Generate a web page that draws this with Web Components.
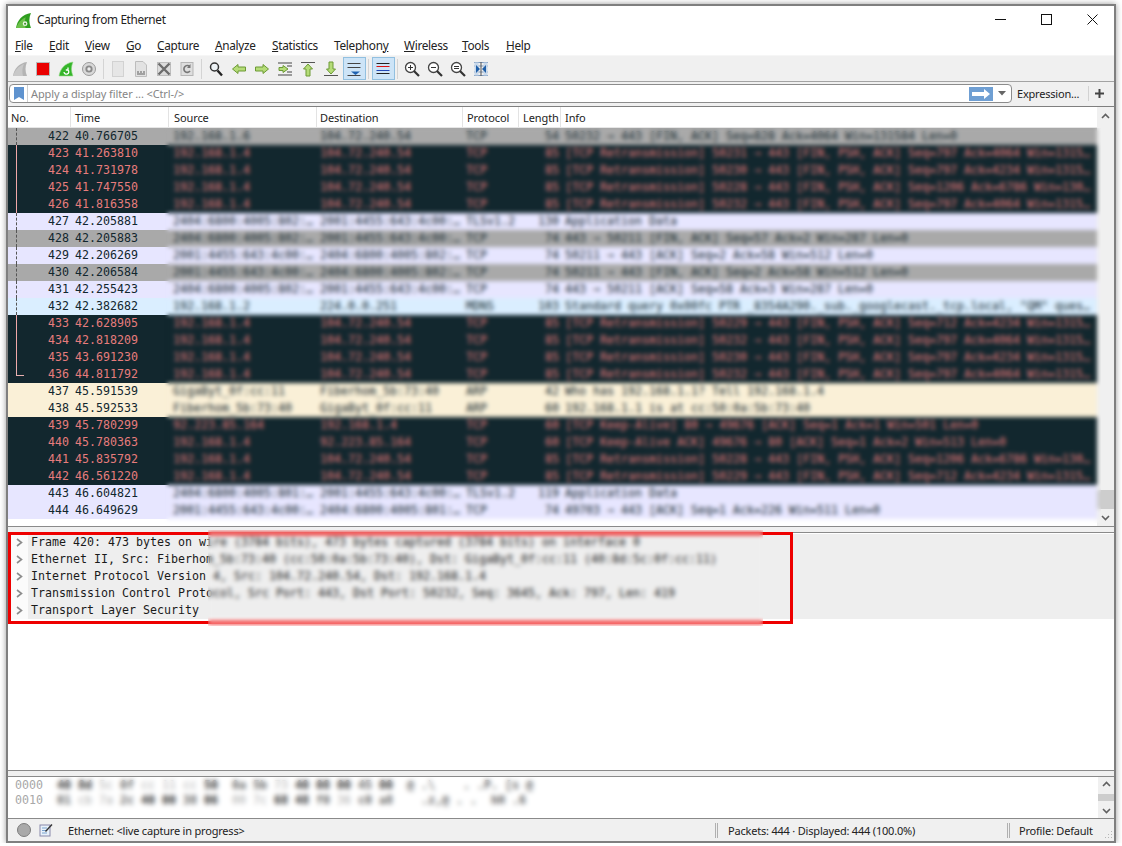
<!DOCTYPE html>
<html>
<head>
<meta charset="utf-8">
<title>Capturing from Ethernet</title>
<style>
html, body { margin: 0; background: #fff; }
body { padding: 4px 6px 0; font-family: "Noto Sans", sans-serif; font-size: 12px; color: #1a1a1a; }
</style>
</head>
<body>
<ws-window>
  <ws-titlebar>Capturing from Ethernet</ws-titlebar>
  <ws-menubar></ws-menubar>
  <ws-toolbar></ws-toolbar>
  <ws-filterbar></ws-filterbar>
  <ws-packet-list></ws-packet-list>
  <ws-detail-tree></ws-detail-tree>
  <ws-hex-view></ws-hex-view>
  <ws-statusbar></ws-statusbar>
</ws-window>

<script>
const MONO = '"DejaVu Sans Mono", monospace'
const FIN = "M1 15C2 8 7 2 15 1C13 6 13 10 15 15Z"

function shadow(el, html) {
    const root = el.attachShadow({ mode: "open" })
    root.innerHTML = html
    return root
}

class WsWindow extends HTMLElement {
    constructor() {
        super()
        shadow(this, `
<style>
:host {
    display: flex;
    flex-direction: column;
    box-sizing: border-box;
    width: 1110px;
    height: 839px;
    border: 2px solid #7f7f7f;
    background: #f0f0f0;
    box-shadow: 0 0 6px rgba(0,0,0,.4);
}
</style>
<slot></slot>`)
    }
}

class WsTitlebar extends HTMLElement {
    constructor() {
        super()
        shadow(this, `
<style>
:host { display: flex; align-items: center; height: 30px; background: #fff; padding: 0 0 0 7px; flex: none; }
svg { flex: none; }
.logo { margin-right: 5px; margin-top: -2px; }
.text { flex: 1; font-size: 11.8px; letter-spacing: -.33px; color: #222; margin-top: -4px; }
.btn { display: flex; justify-content: center; width: 46px; margin-top: -4px; }
.btn:last-child { margin-right: -1px; }
</style>
<svg class="logo" width="17" height="17" viewBox="0 0 16 16">
  <path d="${FIN}" fill="#2f9e1f"/><path d="M1 15C3 10 6 7 10 5C9 9 9 12 10 15Z" fill="#6cc04a"/>
  <circle cx="9.5" cy="11" r="2.2" fill="#e8f4e0"/><circle cx="9.5" cy="11" r="1" fill="#3d8f2d"/>
</svg>
<span class="text"><slot></slot></span>
<span class="btn"><svg width="11" height="11"><path d="M0 5.5H11" stroke="#111"/></svg></span>
<span class="btn"><svg width="11" height="11"><rect x=".5" y=".5" width="10" height="10" fill="none" stroke="#111"/></svg></span>
<span class="btn"><svg width="11" height="11"><path d="M.5 .5L10.5 10.5M10.5 .5L.5 10.5" stroke="#111"/></svg></span>`)
    }
}

// label pieces, underlined part, width of the item
const MENUS = [["", "F", "ile", 34], ["", "E", "dit", 36], ["", "V", "iew", 41], ["", "G", "o", 31], ["", "C", "apture", 58], ["", "A", "nalyze", 57], ["", "S", "tatistics", 62], ["Telephon", "y", "", 70], ["", "W", "ireless", 58], ["", "T", "ools", 44], ["", "H", "elp", 40]]

class WsMenubar extends HTMLElement {
    constructor() {
        super()
        let items = MENUS.map(m => `<span style="width:${m[3]}px">${m[0]}<u>${m[1]}</u>${m[2]}</span>`).join("")
        shadow(this, `
<style>
:host { display: flex; align-items: center; height: 20px; flex: none; background: #fff; padding: 0 0 2px 7px; box-sizing: border-box; border-bottom: 1px solid #f6f6f6; font-size: 11.8px; letter-spacing: -.3px; color: #222; }
span { flex: none; white-space: nowrap; }
u { text-underline-offset: 1px; }
</style>
${items}`)
    }
}

const IC = {
    fin: `<path d="${FIN}" fill="#b4b4b4"/><path d="M1 15C3 9 7 5 12 3C10 7 10 11 11 15Z" fill="#c8c8c8"/>`,
    stop: `<rect x="1.5" y="1.5" width="13" height="13" fill="#ea0000" stroke="#b9b9b9"/>`,
    restart: `<path d="${FIN}" fill="#35b52a" stroke="#9bdc8e" stroke-width=".6"/><path d="M6 11a2.4 2.4 0 1 0 4-2M10 6.5V9H7.8" fill="none" stroke="#fff" stroke-width="1.3"/>`,
    gear: `<circle cx="8" cy="8" r="6.5" fill="#d8d8d8" stroke="#9a9a9a"/><circle cx="8" cy="8" r="3.6" fill="#8a8a8a"/><circle cx="8" cy="8" r="1.7" fill="#ececec"/>`,
    file: `<rect x="2.5" y=".5" width="11" height="15" fill="#e6e6e6" stroke="#d2d2d2"/>`,
    bin: `<path d="M2.5 .5H10L13.5 4V15.5H2.5Z" fill="#e2e2e2" stroke="#bdbdbd"/><path d="M4 11H6M7 11H9M10 11H12M4 13H12" stroke="#8c8c8c" stroke-width="1.4"/>`,
    close: `<rect x="1.5" y="1.5" width="13" height="13" fill="#dcdcdc" stroke="#bdbdbd"/><path d="M2.5 2.5L13.5 13.5M13.5 2.5L2.5 13.5" stroke="#6d6d6d" stroke-width="2.4"/>`,
    reload: `<rect x="2" y="1.5" width="12" height="13" fill="#dedede" stroke="#b5b5b5"/><path d="M11 10a3.4 3.4 0 1 1-.4-4.6" fill="none" stroke="#777" stroke-width="1.7"/><path d="M11.5 3V7H8" fill="#777"/>`,
    find: `<circle cx="6.5" cy="6" r="4" fill="#eef3f6" stroke="#333" stroke-width="1.5"/><path d="M9.5 9.5L14 14.5" stroke="#222" stroke-width="2.4"/>`,
    back: `<path d="M1.5 8L7 3.5V6H14.5V10H7V12.5Z" fill="#b5dc78" stroke="#6c9a34"/>`,
    fwd: `<path d="M14.5 8L9 3.5V6H1.5V10H9V12.5Z" fill="#b5dc78" stroke="#6c9a34"/>`,
    go: `<path d="M1 2H15M1 14H15M10 5H15M10 11H15" stroke="#444"/><path d="M11 8L6 4.5V6.5H2V9.5H6V11.5Z" fill="#b5dc78" stroke="#6c9a34"/>`,
    up: `<path d="M1 1.5H15" stroke="#555"/><path d="M8 3L12.5 8H10V15H6V8H3.5Z" fill="#b5dc78" stroke="#6c9a34"/>`,
    down: `<path d="M1 14.5H15" stroke="#555"/><path d="M8 13L12.5 8H10V1H6V8H3.5Z" fill="#b5dc78" stroke="#6c9a34"/>`,
    auto: `<path d="M1.5 2.5H14.5M1.5 6.5H14.5M1.5 14.5H14.5" stroke="#444"/><path d="M5 10.5H14L9.5 14Z" fill="#1f62b0"/>`,
    color: `<path d="M1.5 2.5H14.5M1.5 12.5H14.5" stroke="#222"/><path d="M1.5 5.5H14.5" stroke="#d11"/><path d="M1.5 9.5H14.5" stroke="#2247b5"/>`,
    zin: `<circle cx="6.5" cy="6.5" r="5" fill="#fff" stroke="#444" stroke-width="1.3"/><path d="M10 10L15 15" stroke="#333" stroke-width="2.2"/><path d="M4 6.5H9M6.5 4V9" stroke="#333"/>`,
    zout: `<circle cx="6.5" cy="6.5" r="5" fill="#fff" stroke="#444" stroke-width="1.3"/><path d="M10 10L15 15" stroke="#333" stroke-width="2.2"/><path d="M4 6.5H9" stroke="#333"/>`,
    znorm: `<circle cx="6.5" cy="6.5" r="5" fill="#fff" stroke="#444" stroke-width="1.3"/><path d="M10 10L15 15" stroke="#333" stroke-width="2.2"/><path d="M4 5.5H9M4 7.5H9" stroke="#333"/>`,
    resize: `<path d="M1 1.5H15M1 14.5H15M1 5H15M1 11H15" stroke="#7f9cc0"/><rect x="1.5" y="1.5" width="4" height="13" fill="#c8d8ea"/><rect x="10.5" y="1.5" width="4" height="13" fill="#c8d8ea"/><path d="M7 8L3 4V12ZM9 8L13 4V12Z" fill="#1f5fa8"/><path d="M8 1V15" stroke="#555"/>`
}

class WsToolbar extends HTMLElement {
    constructor() {
        super()
        const btn = (n, on) => `<span class="b${on ? " on" : ""}"><svg width="16" height="16" viewBox="0 0 16 16">${IC[n]}</svg></span>`
        const sep = w => `<i style="width:${w}px"></i>`
        shadow(this, `
<style>
:host { display: flex; align-items: center; height: 26px; flex: none; box-sizing: border-box; background: #f0f0f0; border-bottom: 1px solid #a3a3a3; padding-left: .5px; }
.b { display: flex; align-items: center; justify-content: center; box-sizing: border-box; width: 23px; height: 23px; flex: none; }
.on { background: #cde4f7; border: 1px solid #92c0e0; }
i { display: block; height: 20px; flex: none; background: linear-gradient(#d4d4d4,#d4d4d4) center/1px 100% no-repeat; }
</style>
${["fin", "stop", "restart", "gear"].map(n => btn(n)).join("")}${sep(6)}
${["file", "bin", "close", "reload"].map(n => btn(n)).join("")}${sep(6)}
${["find", "back", "fwd", "go", "up", "down"].map(n => btn(n)).join("")}${btn("auto", 1)}${sep(6)}${btn("color", 1)}${sep(6)}
${["zin", "zout", "znorm", "resize"].map(n => btn(n)).join("")}`)
    }
}

class WsFilterbar extends HTMLElement {
    constructor() {
        super()
        shadow(this, `
<style>
:host { display: flex; align-items: center; height: 25px; flex: none; box-sizing: border-box; background: #f0f0f0; border-bottom: 1px solid #7f7f7f; padding: 0 0 1px 1px; }
.box { display: flex; align-items: center; box-sizing: border-box; width: 1003px; height: 19px; background: #fff; border: 1px solid #8c8c8c; border-radius: 4px; flex: none; }
.mark { width: 17px; display: flex; justify-content: center; border-right: 1px solid #cfcfcf; height: 17px; align-items: center; flex: none; }
.ph { flex: 1; padding-left: 3px; color: #858585; font-size: 11px; letter-spacing: -.12px; white-space: nowrap; }
.go { display: flex; align-items: center; justify-content: center; width: 24px; height: 14px; background: #6f9fd3; flex: none; }
.drop { width: 18px; display: flex; justify-content: center; flex: none; }
.exp { margin-left: 5px; width: 71px; font-size: 11px; letter-spacing: -.2px; color: #222; white-space: nowrap; border-right: 1px solid #d2d2d2; flex: none; }
.plus { flex: 1; display: flex; justify-content: center; padding-right: 4px; }
</style>
<div class="box">
  <span class="mark"><svg width="10" height="13"><path d="M0 0H10V13L5 10L0 13Z" fill="#5f93cf"/></svg></span>
  <span class="ph">Apply a display filter ... &lt;Ctrl-/&gt;</span>
  <span class="go"><svg width="18" height="10"><path d="M0 3H12V0L18 5L12 10V7H0Z" fill="#fff"/></svg></span>
  <span class="drop"><svg width="8" height="5"><path d="M0 0H8L4 4.5Z" fill="#666"/></svg></span>
</div>
<span class="exp">Expression...</span>
<span class="plus"><svg width="9" height="9"><path d="M4.5 0V9M0 4.5H9" stroke="#444" stroke-width="2"/></svg></span>`)
    }
}

class WsScrollbar extends HTMLElement {
    constructor() {
        super()
        shadow(this, `
<style>
:host { display: flex; flex-direction: column; align-items: center; flex: none; width: var(--sb-w, 17px); background: #f0f0f0; overflow: hidden; }
.a { flex: none; height: var(--sb-btn, 17px); display: flex; align-items: center; justify-content: center; }
.t { flex: 1; width: 100%; padding-top: var(--thumb-gap, 0); box-sizing: border-box; min-height: 0; }
.th { height: var(--thumb-h, 20px); background: #cdcdcd; }
</style>
<span class="a"><svg width="9" height="6"><path d="M1 5L4.5 1.5L8 5" fill="none" stroke="#606060" stroke-width="1.6"/></svg></span>
<div class="t"><div class="th"></div></div>
<span class="a"><svg width="9" height="6"><path d="M1 1L4.5 4.5L8 1" fill="none" stroke="#606060" stroke-width="1.6"/></svg></span>`)
    }
}

const RETR = (p, s, a, w) => `[TCP Retransmission] ${p} → 443 [FIN, PSH, ACK] Seq=${s} Ack=${a} Win=${w}`
const V4 = "192.168.1.4", SRV = "104.72.240.54"
const A = "2404:6800:4005:802:…", B = "2001:4455:643:4c00:…"
// no, time, src, dst, proto, len, info, colour
const PACKETS = [
    [422, "40.766705", "192.168.1.6", SRV, "TCP", 54, "50232 → 443 [FIN, ACK] Seq=828 Ack=4064 Win=131584 Len=0", "g"],
    [423, "41.263810", V4, SRV, "TCP", 85, RETR(50231, 797, 4064, "1315…"), "d"],
    [424, "41.731978", V4, SRV, "TCP", 85, RETR(50230, 797, 4234, "1315…"), "d"],
    [425, "41.747550", V4, SRV, "TCP", 85, RETR(50228, 1206, 6786, "130…"), "d"],
    [426, "41.816358", V4, SRV, "TCP", 85, RETR(50232, 797, 4064, "1315…"), "d"],
    [427, "42.205881", A, B, "TLSv1.2", 130, "Application Data", "p"],
    [428, "42.205883", A, B, "TCP", 74, "443 → 50211 [FIN, ACK] Seq=57 Ack=2 Win=287 Len=0", "g"],
    [429, "42.206269", B, A, "TCP", 74, "50211 → 443 [ACK] Seq=2 Ack=58 Win=512 Len=0", "p"],
    [430, "42.206584", B, A, "TCP", 74, "50211 → 443 [FIN, ACK] Seq=2 Ack=58 Win=512 Len=0", "g"],
    [431, "42.255423", A, B, "TCP", 74, "443 → 50211 [ACK] Seq=58 Ack=3 Win=287 Len=0", "p"],
    [432, "42.382682", "192.168.1.2", "224.0.0.251", "MDNS", 103, 'Standard query 0x00fc PTR _8354A290._sub._googlecast._tcp.local, "QM" ques…', "b"],
    [433, "42.628905", V4, SRV, "TCP", 85, RETR(50229, 712, 4234, "1315…"), "d"],
    [434, "42.818209", V4, SRV, "TCP", 85, RETR(50232, 797, 4064, "1315…"), "d"],
    [435, "43.691230", V4, SRV, "TCP", 85, RETR(50230, 797, 4234, "1315…"), "d"],
    [436, "44.811792", V4, SRV, "TCP", 85, RETR(50232, 797, 4064, "1315…"), "d"],
    [437, "45.591539", "GigaByt_0f:cc:11", "Fiberhom_5b:73:40", "ARP", 42, "Who has 192.168.1.1? Tell 192.168.1.4", "t"],
    [438, "45.592533", "Fiberhom_5b:73:40", "GigaByt_0f:cc:11", "ARP", 60, "192.168.1.1 is at cc:50:0a:5b:73:40", "t"],
    [439, "45.780299", "92.223.85.164", V4, "TCP", 60, "[TCP Keep-Alive] 80 → 49676 [ACK] Seq=1 Ack=1 Win=501 Len=0", "d"],
    [440, "45.780363", V4, "92.223.85.164", "TCP", 60, "[TCP Keep-Alive ACK] 49676 → 80 [ACK] Seq=1 Ack=2 Win=513 Len=0", "d"],
    [441, "45.835792", V4, SRV, "TCP", 85, RETR(50228, 1206, 6786, "130…"), "d"],
    [442, "46.561220", V4, SRV, "TCP", 85, RETR(50229, 712, 4234, "1315…"), "d"],
    [443, "46.604821", A.replace("802", "801"), B, "TLSv1.2", 119, "Application Data", "p"],
    [444, "46.649629", B, A.replace("802", "801"), "TCP", 74, "49703 → 443 [ACK] Seq=1 Ack=226 Win=511 Len=0", "p"]
]

class WsPacketList extends HTMLElement {
    constructor() {
        super()
        const rows = PACKETS.map(p => {
            let tree = ""
            if (p[0] <= 436) {
                const light = p[7] != "d"
                tree = p[0] == 436 ? "end" : light ? "dash" : "line"
            }
            return `<div class="r ${p[7]}"><span class="tr ${tree}"></span><span class="no">${p[0]}</span><span class="ti">${p[1]}</span><span class="sr">${p[2]}</span><span class="de">${p[3]}</span><span class="pr">${p[4]}</span><span class="le">${p[5]}</span><span class="in">${p[6]}</span></div>`
        }).join("")
        shadow(this, `
<style>
:host { display: flex; height: 420px; flex: none; box-sizing: border-box; background: #fff; border-bottom: 1px solid #8a8a8a; font-size: 11px; letter-spacing: -.1px; }
.main { flex: 1; min-width: 0; display: flex; flex-direction: column; }
.head { display: flex; height: 21px; flex: none; box-sizing: border-box; align-items: center; background: #fff; color: #222; border-bottom: 1px solid #e6e6e6; }
.head span { box-sizing: border-box; height: 100%; display: flex; align-items: center; padding-left: 4px; border-right: 1px solid #e3e3e3; flex: none; white-space: nowrap; }
.rows { position: relative; font: 11.63px/17px ${MONO}; letter-spacing: 0; }
.r { display: flex; height: 17px; white-space: nowrap; color: #12272e; }
.r span { flex: none; display: block; }
.g { background: #a9a9a9; }
.d { background: #12272e; color: #e67c7c; }
.p { background: #e7e6ff; }
.b { background: #daeeff; }
.t { background: #faf0d7; }
.tr { width: 8px; height: 17px; box-sizing: border-box; margin-left: 8px; }
.line { border-left: 1px solid #f0a8a8; }
.dash { border-left: 1px dashed #555; }
.end { border-left: 1px solid #e8b0b0; border-bottom: 1px solid #e8b0b0; height: 10px; }
.no { width: 45px; text-align: right; }
.ti { width: 98px; margin-left: 6px; }
.sr { width: 147px; overflow: hidden; }
.de { width: 146px; overflow: hidden; }
.pr { width: 54px; }
.le { width: 39px; text-align: right; }
.in { margin-left: 6px; width: 532px; overflow: hidden; }
.blur { position: absolute; z-index: 1; left: 156px; right: -4px; top: 0; bottom: -4px; backdrop-filter: blur(2.2px); -webkit-mask-image: linear-gradient(to right, transparent, #000 6px); mask-image: linear-gradient(to right, transparent, #000 6px); }
ws-scrollbar { --sb-w: 17px; --sb-btn: 17px; --thumb-gap: 366px; --thumb-h: 19px; }
</style>
<div class="main">
  <div class="head">
    <span style="width:63px;padding-left:3px">No.</span><span style="width:98px">Time</span><span style="width:148px;padding-left:5px">Source</span><span style="width:146px;padding-left:3px">Destination</span><span style="width:56px">Protocol</span><span style="width:42px">Length</span><span style="flex:1;border:0">Info</span>
  </div>
  <div class="rows">${rows}<div class="blur"></div></div>
</div>
<ws-scrollbar></ws-scrollbar>`)
    }
}

const TREE = [
    "Frame 420: 473 bytes on wire (3784 bits), 473 bytes captured (3784 bits) on interface 0",
    "Ethernet II, Src: Fiberhom_5b:73:40 (cc:50:0a:5b:73:40), Dst: GigaByt_0f:cc:11 (40:8d:5c:0f:cc:11)",
    "Internet Protocol Version 4, Src: 104.72.240.54, Dst: 192.168.1.4",
    "Transmission Control Protocol, Src Port: 443, Dst Port: 50232, Seq: 3645, Ack: 797, Len: 419",
    "Transport Layer Security"
]

class WsDetailTree extends HTMLElement {
    constructor() {
        super()
        const rows = TREE.map(t => `<div class="r"><span class="g"><svg width="7" height="9"><path d="M1 1L5.5 4.5L1 8" fill="none" stroke="#8c8c8c" stroke-width="1.6"/></svg></span><span class="x">${t}</span></div>`).join("")
        shadow(this, `
<style>
:host { display: block; position: relative; height: 239px; flex: none; box-sizing: border-box; margin-top: 5px; background: #fff; border-top: 1px solid #8a8a8a; border-bottom: 1px solid #8a8a8a; font: 11.63px/17px ${MONO}; color: #1a1a1a; }
.r { display: flex; height: 17px; white-space: nowrap; }
.g { width: 20px; flex: none; display: flex; align-items: center; justify-content: flex-end; padding-right: 5px; box-sizing: border-box; background: #fbfbfb; }
.x { flex: 1; background: #eeeeee; padding-left: 3px; }
.list { padding-top: 1px; }
.box { position: absolute; left: 0; top: -1px; width: 785px; height: 92px; box-sizing: border-box; border: 3px solid #ee0000; }
.blur { position: absolute; left: 200px; width: 555px; top: -3px; height: 96px; backdrop-filter: blur(2px); }
</style>
<div class="list">${rows}</div>
<div class="box"></div>
<div class="blur"></div>`)
    }
}

// d = dark byte, m = medium, f = faint
const HEX = [
    { bytes: "40 8d 5c 0f cc 11 cc 50 0a 5b 73 40 08 00 45 00".split(" "), tone: "ddfmfffdmmfdddmd", ascii: "@ .\\    . .P. [s @" },
    { bytes: "01 cb 7a 2c 40 00 38 06 00 7c 68 48 f0 36 c0 a8".split(" "), tone: "mffmddmdffddmfmm", ascii: "  .z,@ . .  hH .6" }
]

class WsHexView extends HTMLElement {
    constructor() {
        super()
        const fmt = l => {
            const parts = l.bytes.map((b, i) => `<span class="${l.tone[i]}">${b}</span>`)
            return parts.slice(0, 8).join(" ") + "  " + parts.slice(8).join(" ") + "  " + `<span class="m">${l.ascii}</span>`
        }
        shadow(this, `
<style>
:host { display: flex; position: relative; height: 43px; flex: none; box-sizing: border-box; margin-top: 5px; background: #fff; border-top: 1px solid #8a8a8a; border-bottom: 1px solid #8a8a8a; }
.txt { flex: 1; padding: 1px 0 0 7px; font: 11.63px/15px ${MONO}; white-space: pre; color: #777; }
.off { color: #a8a8a8; }
.d { color: #333; font-weight: bold; }
.m { color: #666; font-weight: bold; }
.f { color: #aaa; }
.blur { position: absolute; left: 40px; width: 500px; top: 0; bottom: 0; backdrop-filter: blur(2.6px); }
ws-scrollbar { --sb-w: 16px; --sb-btn: 14px; --thumb-gap: 3px; --thumb-h: 7px; }
</style>
<div class="txt"><div><span class="off">0000</span>  ${fmt(HEX[0])}</div><div><span class="off">0010</span>  ${fmt(HEX[1])}</div></div>
<div class="blur"></div>
<ws-scrollbar></ws-scrollbar>`)
    }
}

class WsStatusbar extends HTMLElement {
    constructor() {
        super()
        shadow(this, `
<style>
:host { display: flex; align-items: center; height: 22px; flex: none; box-sizing: border-box; background: #f0f0f0; font-size: 11px; letter-spacing: -.2px; color: #222; white-space: nowrap; }
.led { margin-left: 8px; flex: none; }
.pen { margin-left: 7px; flex: none; }
.msg { margin-left: 15px; width: 647px; flex: none; }
.sep { box-sizing: border-box; width: 3px; height: 15px; border-left: 1px solid #b0b0b0; border-right: 1px solid #b0b0b0; flex: none; }
.pk { margin-left: 10px; width: 279px; flex: none; }
.pf { margin-left: 9px; flex: 1; }
.grip { margin-right: 1px; margin-top: 8px; flex: none; }
</style>
<svg class="led" width="16" height="16"><circle cx="8" cy="8" r="6.5" fill="#a9a9a9" stroke="#7d7d7d"/></svg>
<svg class="pen" width="14" height="14" viewBox="0 0 14 14"><rect x="1" y="2" width="10" height="11" fill="#e8f1fa" stroke="#88a"/><path d="M3 5H8M3 7.5H8M3 10H8" stroke="#7aa3cf"/><path d="M6 8L12.5 1L13.5 2L7 9Z" fill="#333"/></svg>
<span class="msg">Ethernet: &lt;live capture in progress&gt;</span>
<span class="sep"></span>
<span class="pk">Packets: 444 · Displayed: 444 (100.0%)</span>
<span class="sep"></span>
<span class="pf">Profile: Default</span>
<svg class="grip" width="9" height="9"><path d="M7 1h1v1H7zM4 4h1v1H4zM7 4h1v1H7zM1 7h1v1H1zM4 7h1v1H4zM7 7h1v1H7z" fill="#b5b5b5"/></svg>`)
    }
}

customElements.define("ws-window", WsWindow)
customElements.define("ws-titlebar", WsTitlebar)
customElements.define("ws-menubar", WsMenubar)
customElements.define("ws-toolbar", WsToolbar)
customElements.define("ws-filterbar", WsFilterbar)
customElements.define("ws-scrollbar", WsScrollbar)
customElements.define("ws-packet-list", WsPacketList)
customElements.define("ws-detail-tree", WsDetailTree)
customElements.define("ws-hex-view", WsHexView)
customElements.define("ws-statusbar", WsStatusbar)
</script>
</body>
</html>
